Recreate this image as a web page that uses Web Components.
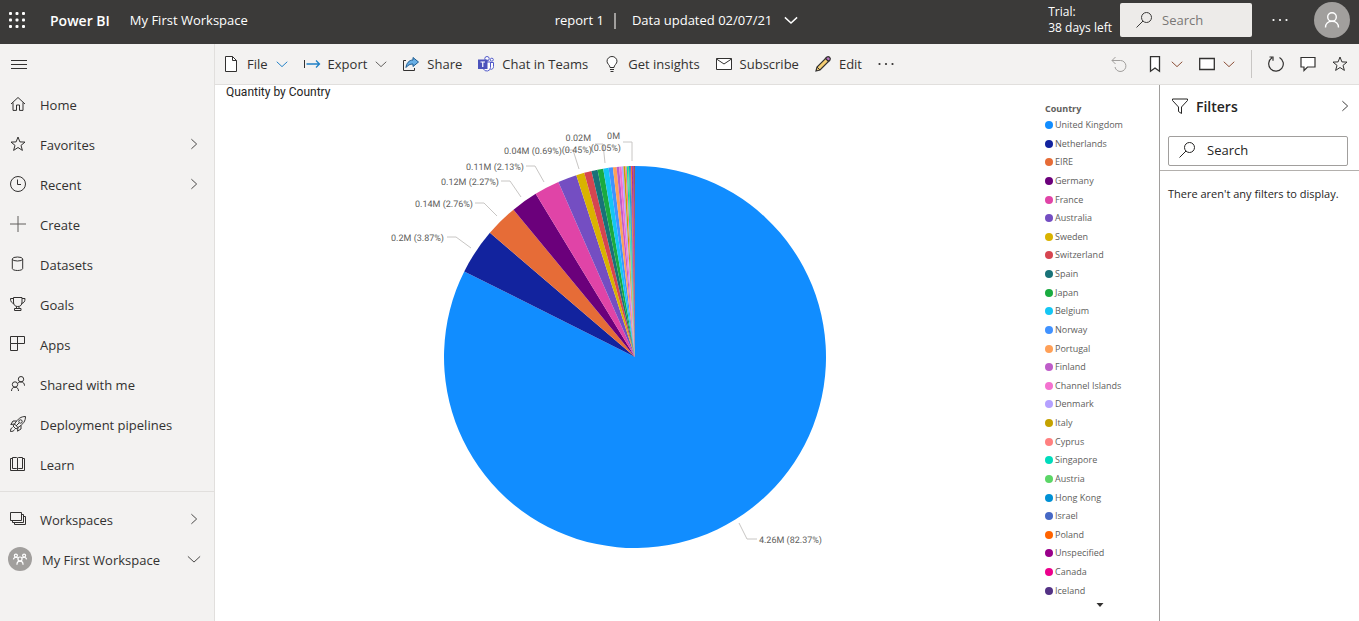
<!DOCTYPE html>
<html lang="en">
<head>
<meta charset="utf-8">
<title>report 1 - Power BI</title>
<style>
html, body { margin: 0; height: 100%; }
body { font-family: "Open Sans", "Noto Sans", sans-serif; font-size: 13px; color: #323130; background: #fff; }
</style>
</head>
<body>
<bi-app></bi-app>
<script>
const define = (name, html, setup) => {
  const template = document.createElement('template');
  template.innerHTML = html;
  customElements.define(name, class extends HTMLElement {
    constructor() {
      super();
      this.attachShadow({ mode: 'open' }).append(template.content.cloneNode(true));
    }
    connectedCallback() {
      if (this.ready) return;
      this.ready = true;
      if (setup) setup(this, this.shadowRoot);
    }
  });
};

/* 16 x 16 line icons */
const ICONS = {
  waffle: '<g fill="currentColor" stroke="none">' + [0, 6.5, 13].map(y => [0, 6.5, 13].map(x => `<rect x="${x}" y="${y}" width="3" height="3" rx="1"/>`).join('')).join('') + '</g>',
  menu: '<path d="M0 3.5h16M0 7.5h16M0 11.5h16"/>',
  home: '<path d="M1 8 8 1.5 15 8M3 6.5v7.9h3.5V9h3v5.4H13V6.5"/>',
  star: '<path d="M8 1l1.9 4.9 5.1.2-4 3.3 1.4 5L8 11.5l-4.4 2.9 1.4-5-4-3.3 5.1-.2z"/>',
  clock: '<circle cx="8" cy="8" r="7.5"/><path d="M7.5 3.5v5H11"/>',
  plus: '<path stroke="#605e5c" d="M8 0v16M0 8h16"/>',
  data: '<ellipse cx="7.5" cy="3" rx="5.2" ry="2"/><path d="M2.3 3v9.5c0 1 2 2 5.2 2s5.2-1 5.2-2V3"/>',
  goals: '<path d="M3.500 1.500h8.500v4.500c0 3-1.500 4.500-4.250 4.500S3.500 9 3.500 6zM3.500 2.500h-3C.5 5.500 1.500 7 4 7.500M12 2.500h3c0 3-1 4.500-3.500 5M6.500 10.500v2M9 10.500v2M4.500 12.500H11V14.500H4.500z"/>',
  apps: '<path d="M.5.5h14v7h-14zM.5 7.500v7h7v-14"/>',
  share2: '<circle cx="5" cy="8.500" r="2.700"/><path d="M1.500 15c0-2.500 1.500-3.800 3.500-3.800s3.500 1.300 3.500 3.800"/><circle cx="11" cy="3.200" r="2.700"/><path d="M8 7c.8-.8 1.800-1.100 3-1.100 2 0 3.500 1.300 3.500 3.800"/>',
  rocket: '<path d="M15.500.5C11 .5 8 2.500 4.500 8L8 11.500c5.500-3.500 7.500-6.500 7.500-11zM6.500 5H3L.8 8.500l3.700-.5M11 9.500V13l-3.500 2.200.5-3.700M4.500 8l-1.500 2 3 3 2-1.500M2.500 11.500c-1.500.5-2 2-2 4 2 0 3.500-.5 4-2"/><circle cx="10.500" cy="5.500" r="1.700"/><path d="M6 10l3-3"/>',
  book: '<path d="M2.500 1.500h4c.6 0 1 .5 1 1v11c0-.6-.4-1-1-1h-4zM12.500 1.500h-4c-.6 0-1 .5-1 1v11c0-.6.4-1 1-1h4zM2.500 2.500h-2v12h14v-12h-2"/>',
  stack: '<path d="M.5 1.500h11v8H.5zM11.500 3.500h2v8h-11v-2M13.500 5.500h2v8h-11v-2"/>',
  right: '<path d="M5 2.500l6 5.500-6 5.500"/>',
  down: '<path d="M1 5l7 6.500L15 5"/>',
  file: '<path fill="#fff" d="M2.500.5h7l4 4v11h-11z"/><path d="M9.500.5v4h4"/>',
  export: '<path d="M.5 4v8"/><path stroke="#1f80c6" stroke-width="1.300" d="M2.500 8h13M12 4.500L15.500 8 12 11.500"/>',
  share: '<path d="M3 4.500H.5v10h11V12"/><path fill="#69afe5" stroke="#1e5c91" d="M10 1.500l5.500 4.500L10 10.500V8C7 8 5 9 3 11.500 3.300 7.500 6 4 10 4z"/>',
  bulb: '<path fill="#fff" d="M6 11.500C6 9 3 8 3 5.200A4.900 4.900 0 0 1 8 .5a4.900 4.900 0 0 1 5 4.700C13 8 10 9 10 11.500z"/><path d="M6 13.500h4M6.500 15.500h3"/>',
  mail: '<path fill="#fff" d="M.5 2.500h15v11H.5z"/><path d="M.5 3l7.500 5 7.500-5"/>',
  pencil: '<path fill="#f5ce73" stroke-width="1.200" d="M1 15l1-4L11.500 1.500l3 3L5 14z"/><path fill="#b974c2" stroke-width="1.200" d="M10.500 2.500L12 1c1.600-1.200 4.200 1 3 3l-1.500 1.500z"/><path d="M2 11l3 3"/>',
  more: '<g fill="currentColor" stroke="none"><circle cx="1.500" cy="8" r="1.100"/><circle cx="8" cy="8" r="1.100"/><circle cx="14.500" cy="8" r="1.100"/></g>',
  undo: '<path d="M1 4.500h8.500a5.500 5.500 0 1 1-5.500 6.500M4.500 1L1 4.500 4.500 8"/>',
  bookmark: '<path fill="#fff" stroke-width="1.300" d="M3.500.7h9v14.500L8 12l-4.500 3.200z"/>',
  rect: '<path fill="#fff" stroke-width="1.300" d="M.7 2.500h14.600v11H.7z"/>',
  refresh: '<path stroke-width="1.200" d="M11.500 1.500a7.300 7.300 0 1 1-7.500.3M1.500 1h3.500v3.800"/>',
  comment: '<path fill="#fff" stroke-width="1.200" d="M1 1.500h14v9.500H7.500L4 14.500V11H1z"/>',
  search: '<circle cx="10.500" cy="5.500" r="5"/><path d="M7 9L.5 15.500"/>',
  person: '<circle cx="8" cy="5" r="4.300"/><path d="M1.500 15.500C1.500 12 4 9.300 8 9.300s6.500 2.700 6.500 6.200"/>',
  funnel: '<path d="M.5 1h15v1.500l-6 6.500v6.500l-3-2V9L.5 2.500z"/>',
  group: '<g stroke-width="1.400"><circle cx="8" cy="8" r="2.300"/><path d="M4.500 14.500c0-2.500 1.300-4 3.500-4s3.500 1.500 3.500 4"/><circle cx="3.300" cy="4" r="1.700"/><circle cx="12.700" cy="4" r="1.700"/><path d="M.5 8.500C.8 6.800 2 6 3.300 6c1 0 1.700.4 2.200 1M15.500 8.500c-.3-1.700-1.500-2.500-2.800-2.500-1 0-1.700.4-2.200 1"/></g>',
  caret: '<path fill="currentColor" stroke="none" d="M1 4h14L8 12z"/>',
  teams: '<g stroke="#5059c9"><circle cx="9" cy="2.700" r="2.200" fill="#fff"/><circle cx="13.800" cy="3.700" r="1.500" fill="#fff"/><path fill="#fff" d="M5.500 6h7v5.500a3.700 3.700 0 0 1-7 1.500zM12.500 6.500h3v4c0 2-1.200 3-3 2.800"/></g><path fill="#4b53bc" stroke="none" d="M0 3.500h9.500v9.500H0z"/><path stroke="#fff" stroke-width="1.200" d="M2.500 6h4.500M4.750 6v5"/>'
};
define('bi-icon', `<style>
:host { display: inline-flex; flex: none; width: var(--size, 16px); height: var(--size, 16px); }
svg { width: 100%; height: 100%; overflow: visible; fill: none; stroke: currentColor; stroke-width: var(--stroke, 1); }
</style><svg viewBox="0 0 16 16" aria-hidden="true"></svg>`, (el, root) => {
  root.querySelector('svg').innerHTML = ICONS[el.getAttribute('name')];
});

define('bi-header', `<style>
:host { display: grid; grid-template-columns: 1fr auto 1fr; align-items: center; height: 44px; box-sizing: border-box; padding: 0 9px 4px; background: #3b3a39; color: #fff; }
div { display: flex; align-items: center; }
button { font: inherit; color: inherit; background: none; border: 0; padding: 0; display: flex; align-items: center; }
a { color: inherit; text-decoration: none; }
.brand { font-size: 14px; font-weight: 600; margin: 0 20px 0 25px; }
.bar { width: 2px; height: 16px; background: #a19f9d; margin: 2px 16px 0 10px; }
.mid { padding-right: 6px; }
.mid bi-icon { margin-left: 12px; --size: 14px; --stroke: 1.6; }
.right { justify-content: flex-end; }
.trial { font-size: 12px; line-height: 16px; margin-right: 8px; }
label { display: flex; align-items: center; width: 132px; height: 34px; box-sizing: border-box; padding: 0 16px; gap: 10px; background: #edebe9; border-radius: 2px; color: #3b3a39; }
input { font: inherit; border: 0; background: none; padding: 0; width: 100%; min-width: 0; outline: 0; }
input::placeholder { color: #797775; opacity: 1; }
.more { margin: 0 26px 0 20px; }
.avatar { width: 36px; height: 36px; border-radius: 50%; background: #a19f9d; justify-content: center; --stroke: 1.4; }
</style>
<div><button aria-label="App launcher"><bi-icon name="waffle"></bi-icon></button><a class="brand" href="#">Power BI</a><a href="#">My First Workspace</a></div>
<div class="mid"><span>report 1</span><span class="bar"></span><button>Data updated 02/07/21<bi-icon name="down"></bi-icon></button></div>
<div class="right"><span class="trial">Trial:<br>38 days left</span>
<label><bi-icon name="search"></bi-icon><input type="text" placeholder="Search" aria-label="Search"></label>
<button class="more" aria-label="More options"><bi-icon name="more"></bi-icon></button>
<button class="avatar" aria-label="Account"><bi-icon name="person"></bi-icon></button></div>`);

define('bi-nav-item', `<style>
:host { display: block; }
a { display: flex; align-items: center; height: 40px; padding: 0 13px 0 10px; gap: 14px; color: #323130; text-decoration: none; }
span { flex: 1; }
a > bi-icon { margin-bottom: 2px; }
i { display: flex; align-items: center; justify-content: center; width: 24px; height: 24px; border-radius: 50%; background: #a19f9d; color: #fff; margin: 0 -4px 2px -2px; --size: 14px; }
.end { --size: 14px; }
</style><a href="#"><span><slot></slot></span></a>`, (el, root) => {
  const a = root.querySelector('a');
  const icon = `<bi-icon name="${el.getAttribute('icon')}"></bi-icon>`;
  a.insertAdjacentHTML('afterbegin', el.hasAttribute('badge') ? `<i>${icon}</i>` : icon);
  if (el.hasAttribute('end')) a.insertAdjacentHTML('beforeend', `<bi-icon class="end" name="${el.getAttribute('end')}"></bi-icon>`);
});

define('bi-sidebar', `<style>
:host { display: block; background: #f3f2f1; border-right: 1px solid #e1dfdd; }
button { display: flex; align-items: center; height: 41px; padding: 0 11px; border: 0; background: none; color: #323130; }
hr { border: 0; border-top: 1px solid #e1dfdd; margin: 6px 0 8px; }
</style>
<button aria-label="Navigation pane"><bi-icon name="menu"></bi-icon></button>
<nav>
<bi-nav-item icon="home">Home</bi-nav-item>
<bi-nav-item icon="star" end="right">Favorites</bi-nav-item>
<bi-nav-item icon="clock" end="right">Recent</bi-nav-item>
<bi-nav-item icon="plus">Create</bi-nav-item>
<bi-nav-item icon="data">Datasets</bi-nav-item>
<bi-nav-item icon="goals">Goals</bi-nav-item>
<bi-nav-item icon="apps">Apps</bi-nav-item>
<bi-nav-item icon="share2">Shared with me</bi-nav-item>
<bi-nav-item icon="rocket">Deployment pipelines</bi-nav-item>
<bi-nav-item icon="book">Learn</bi-nav-item>
<hr>
<bi-nav-item icon="stack" end="right">Workspaces</bi-nav-item>
<bi-nav-item icon="group" badge end="down">My First Workspace</bi-nav-item>
</nav>`);

define('bi-tool', `<style>
:host { display: block; }
button { display: flex; align-items: center; gap: 8px; height: 40px; padding: 0; border: 0; background: none; font: inherit; color: inherit; white-space: nowrap; }
.menu { --size: 12px; --stroke: 1.3; color: var(--menu, #605e5c); }
</style><button><slot></slot></button>`, (el, root) => {
  const b = root.querySelector('button');
  b.insertAdjacentHTML('afterbegin', `<bi-icon name="${el.getAttribute('icon')}"></bi-icon>`);
  if (el.hasAttribute('menu')) b.insertAdjacentHTML('beforeend', '<bi-icon class="menu" name="down"></bi-icon>');
  if (el.title) b.setAttribute('aria-label', el.title);
});

define('bi-toolbar', `<style>
:host { display: flex; align-items: center; gap: 16px; height: 40px; padding: 0 11px 0 8px; background: #f3f2f1; border-bottom: 1px solid #e1dfdd; color: #323130; }
.space { flex: 1; }
.rule { width: 1px; height: 28px; background: #c8c6c4; }
.blue { --menu: #1f80c6; }
.red { --menu: #8a4b32; }
.off { color: #a19f9d; margin-right: 4px; }
</style>
<bi-tool class="blue" icon="file" menu>File</bi-tool>
<bi-tool icon="export" menu>Export</bi-tool>
<bi-tool icon="share">Share</bi-tool>
<bi-tool icon="teams">Chat in Teams</bi-tool>
<bi-tool icon="bulb">Get insights</bi-tool>
<bi-tool icon="mail">Subscribe</bi-tool>
<bi-tool icon="pencil">Edit</bi-tool>
<bi-tool icon="more" title="More options"></bi-tool>
<div class="space"></div>
<bi-tool class="off" icon="undo" title="Reset"></bi-tool>
<bi-tool class="red" icon="bookmark" menu title="Bookmarks"></bi-tool>
<bi-tool class="red" icon="rect" menu title="View"></bi-tool>
<div class="rule"></div>
<bi-tool icon="refresh" title="Refresh"></bi-tool>
<bi-tool icon="comment" title="Comment"></bi-tool>
<bi-tool icon="star" title="Favorite"></bi-tool>`);

const COUNTRIES = [
  ['United Kingdom', '#118dff', 82.37], ['Netherlands', '#12239e', 3.87], ['EIRE', '#e66c37', 2.76],
  ['Germany', '#6b007b', 2.27], ['France', '#e044a7', 2.13], ['Australia', '#744ec2', 1.6],
  ['Sweden', '#d9b300', 0.69], ['Switzerland', '#d64550', 0.62], ['Spain', '#197278', 0.52],
  ['Japan', '#1aab40', 0.48], ['Belgium', '#15c6f4', 0.45], ['Norway', '#4092ff', 0.36],
  ['Portugal', '#ffa058', 0.31], ['Finland', '#be5dc9', 0.22], ['Channel Islands', '#f472d0', 0.2],
  ['Denmark', '#b5a1ff', 0.16], ['Italy', '#c4a200', 0.15], ['Cyprus', '#ff8080', 0.12],
  ['Singapore', '#00dbbc', 0.1], ['Austria', '#5bd667', 0.09], ['Hong Kong', '#0091d5', 0.09],
  ['Israel', '#4668c5', 0.08], ['Poland', '#ff6300', 0.07], ['Unspecified', '#99008a', 0.07],
  ['Canada', '#ec008c', 0.05], ['Iceland', '#533285', 0.05], ['Other', '#99700a', 0.03], ['Rest', '#8f1d2c', 0.06]
];

/* label text, its right edge and baseline, then its leader line; the pie's centre is 0,0 */
const LABELS = [
  ['0.2M (3.87%)', -191, -116, '-188,-120 -179,-120 -164,-109'],
  ['0.14M (2.76%)', -162, -150, '-160,-154 -151,-154 -138,-141'],
  ['0.12M (2.27%)', -136, -172, '-134,-176 -125,-176 -114,-160'],
  ['0.11M (2.13%)', -111, -187, '-109,-191 -100,-191 -91,-175'],
  ['0.04M (0.69%)', -73, -203, '-70,-207 -62,-207 -56,-188'],
  ['0.02M', -44, -216], ['(0.45%)', -43, -204, '-40,-213 -32,-213 -30,-194'],
  ['0M', -15, -218], ['(0.05%)', -14, -206, '-12,-215 -3,-215 -3,-196'],
  ['4.26M (82.37%)', 187, 186, '104,166 112,182 122,182']
];
define('bi-pie', `<style>
:host { display: block; min-width: 0; }
svg { display: block; width: 100%; height: 100%; }
text { font-family: Roboto, sans-serif; font-size: 9px; fill: #605e5c; text-anchor: end; text-rendering: geometricPrecision; }
polyline { fill: none; stroke: #c8c6c4; }
</style><svg viewBox="-410 -256 820 520" role="img" aria-label="Quantity by Country"></svg>`, (el, root) => {
  const total = COUNTRIES.reduce((s, c) => s + c[2], 0), r = 191;
  let sum = 0, out = '';
  const at = v => { const a = v / total * 2 * Math.PI; return (r * Math.sin(a)).toFixed(2) + ' ' + (-r * Math.cos(a)).toFixed(2); };
  for (const [, color, v] of COUNTRIES) {
    out += `<path fill="${color}" d="M0 0L${at(sum)}A${r} ${r} 0 ${v > 50 ? 1 : 0} 1 ${at(sum + v)}Z"/>`;
    sum += v;
  }
  for (const [text, x, y, line] of LABELS) {
    if (line) out += `<polyline points="${line}"/>`;
    out += `<text x="${x}" y="${y}">${text}</text>`;
  }
  root.querySelector('svg').innerHTML = out;
});

define('bi-legend', `<style>
:host { display: flex; flex-direction: column; font-size: 9px; line-height: 12px; color: #605e5c; padding: 18px 4px 12px 0; box-sizing: border-box; }
h3 { font: inherit; font-weight: 700; margin: 0 0 4px; }
ul { list-style: none; margin: 0 0 4px; padding: 0; flex: 1; display: flex; flex-direction: column; justify-content: space-between; }
li { display: flex; align-items: center; gap: 2px; height: 12px; white-space: nowrap; }
i { width: 8px; height: 8px; border-radius: 50%; }
button { align-self: center; display: flex; padding: 0; border: 0; background: none; color: #323130; }
bi-icon { --size: 8px; }
</style><h3>Country</h3><ul></ul><button aria-label="Scroll down"><bi-icon name="caret"></bi-icon></button>`, (el, root) => {
  root.querySelector('ul').innerHTML = COUNTRIES.slice(0, 26).map(c => `<li><i style="background:${c[1]}"></i>${c[0]}</li>`).join('');
});

define('bi-report', `<style>
:host { display: grid; grid-template-columns: minmax(0, 1fr) 114px; grid-template-rows: minmax(0, 1fr); padding-left: 10px; background: #fff; }
section { display: flex; flex-direction: column; min-height: 0; }
h2 { font: 400 12px/14px Roboto, sans-serif; color: #252423; margin: 0 0 2px; padding-left: 1px; }
bi-pie { flex: 1; min-height: 0; }
</style><section><h2>Quantity by Country</h2><bi-pie></bi-pie></section><bi-legend></bi-legend>`);

define('bi-filters', `<style>
:host { display: block; border-left: 1px solid #a19f9d; background: #fff; color: #252423; }
header { padding: 0 11px 4px 8px; border-bottom: 1px solid #b3b0ad; }
.head { display: flex; align-items: center; height: 42px; padding-left: 4px; gap: 8px; margin-right: -4px; }
h2 { font-size: 14px; font-weight: 600; margin: 0; flex: 1; }
button { display: flex; padding: 0; border: 0; background: none; color: inherit; }
.head button { --size: 14px; }
label { display: flex; align-items: center; gap: 12px; height: 30px; box-sizing: border-box; margin-top: 9px; padding: 0 10px; border: 1px solid #a19f9d; border-radius: 2px; }
label bi-icon { margin-bottom: 2px; }
input { font: inherit; border: 0; padding: 0 0 2px; width: 100%; min-width: 0; outline: 0; }
input::placeholder { color: #252423; opacity: 1; }
p { margin: 0; padding: 15px 8px; font-size: 11px; line-height: 16px; }
</style>
<header><div class="head"><bi-icon name="funnel"></bi-icon><h2>Filters</h2><button aria-label="Collapse"><bi-icon name="right"></bi-icon></button></div>
<label><bi-icon name="search"></bi-icon><input type="text" placeholder="Search" aria-label="Search filters"></label></header>
<p>There aren't any filters to display.</p>`);

define('bi-app', `<style>
:host { display: grid; grid-template: auto auto minmax(0, 1fr) / 215px minmax(0, 1fr) 200px; min-height: 100vh; }
bi-header { grid-column: 1 / -1; }
bi-sidebar { grid-row: 2 / 4; }
bi-toolbar { grid-column: 2 / -1; }
</style>
<bi-header></bi-header><bi-sidebar></bi-sidebar><bi-toolbar></bi-toolbar><bi-report></bi-report><bi-filters></bi-filters>`);
</script>
</body>
</html>
